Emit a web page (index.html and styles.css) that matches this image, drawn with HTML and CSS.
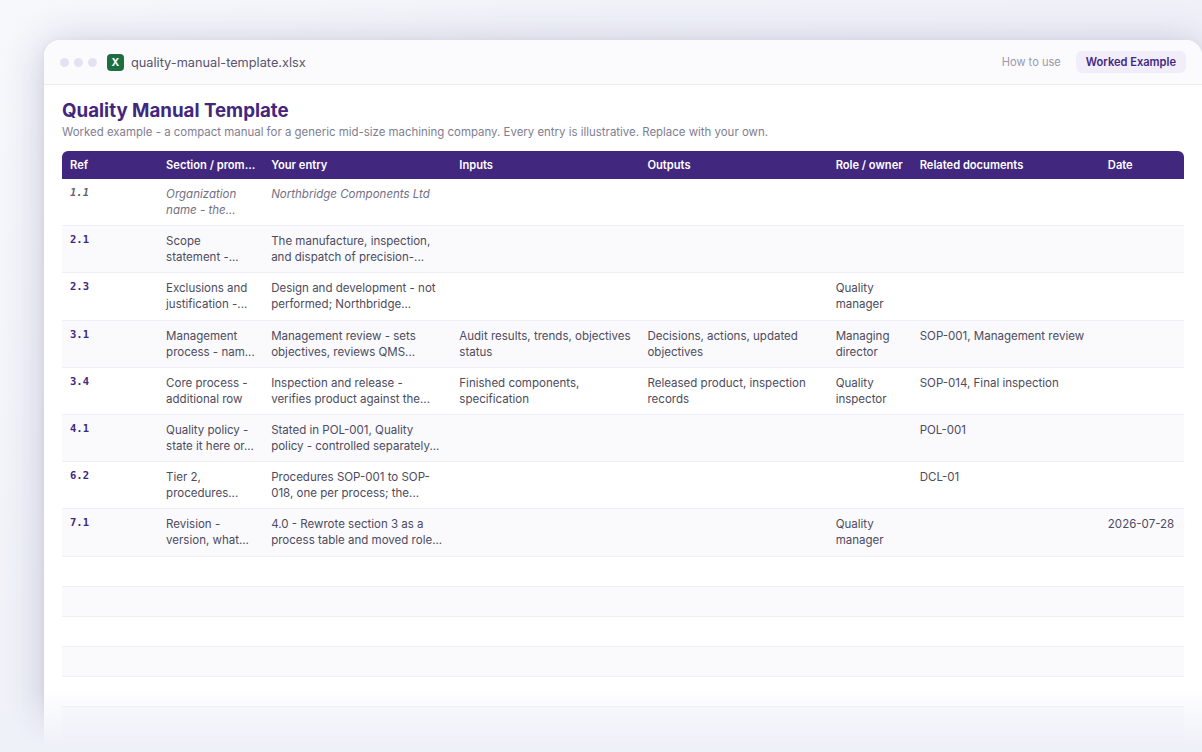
FILE: index.html
```html
<!DOCTYPE html>
<html lang="en">
<head>
    <meta charset="UTF-8">
    <meta name="viewport" content="width=device-width, initial-scale=1.0">
    <title>Quality Manual Template</title>
    <link rel="stylesheet" href="styles.css">
</head>
<body>
    <div class="window">
        <div class="titlebar">
            <div class="dots">
                <span class="dot"></span>
                <span class="dot"></span>
                <span class="dot"></span>
            </div>
            <span class="file-icon">X</span>
            <span class="file-name">quality-manual-template.xlsx</span>
            <div class="tabs">
                <span class="tab">How to use</span>
                <span class="tab active">Worked Example</span>
            </div>
        </div>

        <div class="sheet">
            <h1>Quality Manual Template</h1>
            <p class="subtitle">Worked example - a compact manual for a generic mid-size machining company. Every entry is illustrative. Replace with your own.</p>

            <table>
                <colgroup>
                    <col class="c-ref">
                    <col class="c-section">
                    <col class="c-wide">
                    <col class="c-wide">
                    <col class="c-wide">
                    <col class="c-role">
                    <col class="c-wide">
                    <col class="c-date">
                </colgroup>
                <thead>
                    <tr>
                        <th>Ref</th>
                        <th>Section / prom...</th>
                        <th>Your entry</th>
                        <th>Inputs</th>
                        <th>Outputs</th>
                        <th>Role / owner</th>
                        <th>Related documents</th>
                        <th>Date</th>
                    </tr>
                </thead>
                <tbody>
                    <tr class="sample">
                        <td class="ref">1.1</td>
                        <td>Organization name - the...</td>
                        <td>Northbridge Components Ltd</td>
                        <td></td><td></td><td></td><td></td><td></td>
                    </tr>
                    <tr>
                        <td class="ref">2.1</td>
                        <td>Scope statement -...</td>
                        <td>The manufacture, inspection, and dispatch of precision-...</td>
                        <td></td><td></td><td></td><td></td><td></td>
                    </tr>
                    <tr>
                        <td class="ref">2.3</td>
                        <td>Exclusions and justification -...</td>
                        <td>Design and development - not performed; Northbridge...</td>
                        <td></td><td></td>
                        <td>Quality manager</td>
                        <td></td><td></td>
                    </tr>
                    <tr>
                        <td class="ref">3.1</td>
                        <td>Management process - nam...</td>
                        <td>Management review - sets objectives, reviews QMS...</td>
                        <td>Audit results, trends, objectives status</td>
                        <td>Decisions, actions, updated objectives</td>
                        <td>Managing director</td>
                        <td>SOP-001, Management review</td>
                        <td></td>
                    </tr>
                    <tr>
                        <td class="ref">3.4</td>
                        <td>Core process - additional row</td>
                        <td>Inspection and release - verifies product against the...</td>
                        <td>Finished components, specification</td>
                        <td>Released product, inspection records</td>
                        <td>Quality inspector</td>
                        <td>SOP-014, Final inspection</td>
                        <td></td>
                    </tr>
                    <tr>
                        <td class="ref">4.1</td>
                        <td>Quality policy - state it here or...</td>
                        <td>Stated in POL-001, Quality policy - controlled separately...</td>
                        <td></td><td></td><td></td>
                        <td>POL-001</td>
                        <td></td>
                    </tr>
                    <tr>
                        <td class="ref">6.2</td>
                        <td>Tier 2, procedures...</td>
                        <td>Procedures SOP-001 to SOP-018, one per process; the...</td>
                        <td></td><td></td><td></td>
                        <td>DCL-01</td>
                        <td></td>
                    </tr>
                    <tr>
                        <td class="ref">7.1</td>
                        <td>Revision - version, what...</td>
                        <td>4.0 - Rewrote section 3 as a process table and moved role...</td>
                        <td></td><td></td>
                        <td>Quality manager</td>
                        <td></td>
                        <td>2026-07-28</td>
                    </tr>
                    <tr class="empty"><td colspan="8"></td></tr>
                    <tr class="empty"><td colspan="8"></td></tr>
                    <tr class="empty"><td colspan="8"></td></tr>
                    <tr class="empty"><td colspan="8"></td></tr>
                    <tr class="empty"><td colspan="8"></td></tr>
                    <tr class="empty"><td colspan="8"></td></tr>
                </tbody>
            </table>
        </div>
    </div>

    <!-- fades the bottom of the window into the page background -->
    <div class="fade"></div>
</body>
</html>
```

FILE: styles.css
```css
* {
    margin: 0;
    padding: 0;
    box-sizing: border-box;
}

html, body {
    height: 100%;
    overflow: hidden;
}

body {
    background: linear-gradient(135deg, #f7f8fc 0%, #f1f3f9 30%, #eeeef7 100%);
    font-family: Inter, "Liberation Sans", sans-serif;
    padding: 40px 0 0 44px;
}

.window {
    width: 1158px;
    height: 712px;
    background-color: #fff;
    border-radius: 16px 16px 0 0;
    box-shadow: 0 4px 40px rgba(45, 40, 105, 0.24), 0 2px 8px rgba(45, 40, 105, 0.05);
}

.titlebar {
    height: 45px;
    display: flex;
    align-items: center;
    padding: 0 16px;
    background-color: #fbfbfe;
    border-bottom: 1px solid #ecebf3;
    border-radius: 16px 16px 0 0;
}

.dots {
    display: flex;
    gap: 5px;
    margin-right: 10px;
}

.dot {
    width: 9px;
    height: 9px;
    border-radius: 50%;
    background-color: #e4e2f0;
}

.file-icon {
    width: 17px;
    height: 17px;
    border-radius: 4px;
    background-color: #1d6f42;
    color: white;
    font-size: 10.5px;
    font-weight: 700;
    line-height: 17px;
    text-align: center;
    margin-right: 7px;
}

.file-name {
    font-size: 12.75px;
    color: #57546c;
}

.tabs {
    margin-left: auto;
    display: flex;
    align-items: center;
    gap: 5px;
}

.tab {
    font-size: 11.1px;
    color: #9a98ab;
    padding: 4px 10px;
    border-radius: 6px;
    line-height: 14px;
}

.tab.active {
    background-color: #f1eefa;
    color: #42277f;
    font-weight: 600;
}

.sheet {
    padding: 15px 18px 0;
}

h1 {
    font-size: 18.7px;
    line-height: 22px;
    font-weight: 700;
    color: #42277f;
}

.subtitle {
    font-size: 11.45px;
    line-height: 16px;
    color: #7f7d92;
    margin-top: 2px;
    margin-bottom: 11px;
}

table {
    width: 100%;
    table-layout: fixed;
    border-collapse: separate;
    border-spacing: 0;
    font-size: 11.52px;
}

.c-ref { width: 96px; }
.c-section { width: 105px; }
.c-wide { width: 188px; }
.c-role { width: 84px; }
.c-date { width: 84px; }

th {
    height: 28px;
    padding: 0 8px;
    background-color: #42277f;
    color: white;
    font-size: 11.15px;
    font-weight: 600;
    text-align: left;
    white-space: nowrap;
}

th:first-child { border-top-left-radius: 6px; }
th:last-child { border-top-right-radius: 6px; }

td {
    height: 47.2px;
    padding: 7px 8px;
    vertical-align: top;
    line-height: 16px;
    color: #4d4b5e;
    border-bottom: 1px solid #efeff5;
}

tbody tr:nth-child(even) td {
    background-color: #fafafd;
}

.ref {
    font-family: "DejaVu Sans Mono", "Liberation Mono", monospace;
    font-size: 10.5px;
    font-weight: 700;
    line-height: 13px;
    color: #42277f;
}

.sample td {
    font-style: italic;
    color: #736f86;
}

.sample .ref {
    color: #645f79;
}

.empty td {
    height: 30px;
    padding: 0;
}

.fade {
    position: absolute;
    left: 0;
    right: 0;
    bottom: 0;
    height: 64px;
    background: linear-gradient(to bottom, rgba(240, 242, 250, 0), #eff1f9 90%);
}
```
